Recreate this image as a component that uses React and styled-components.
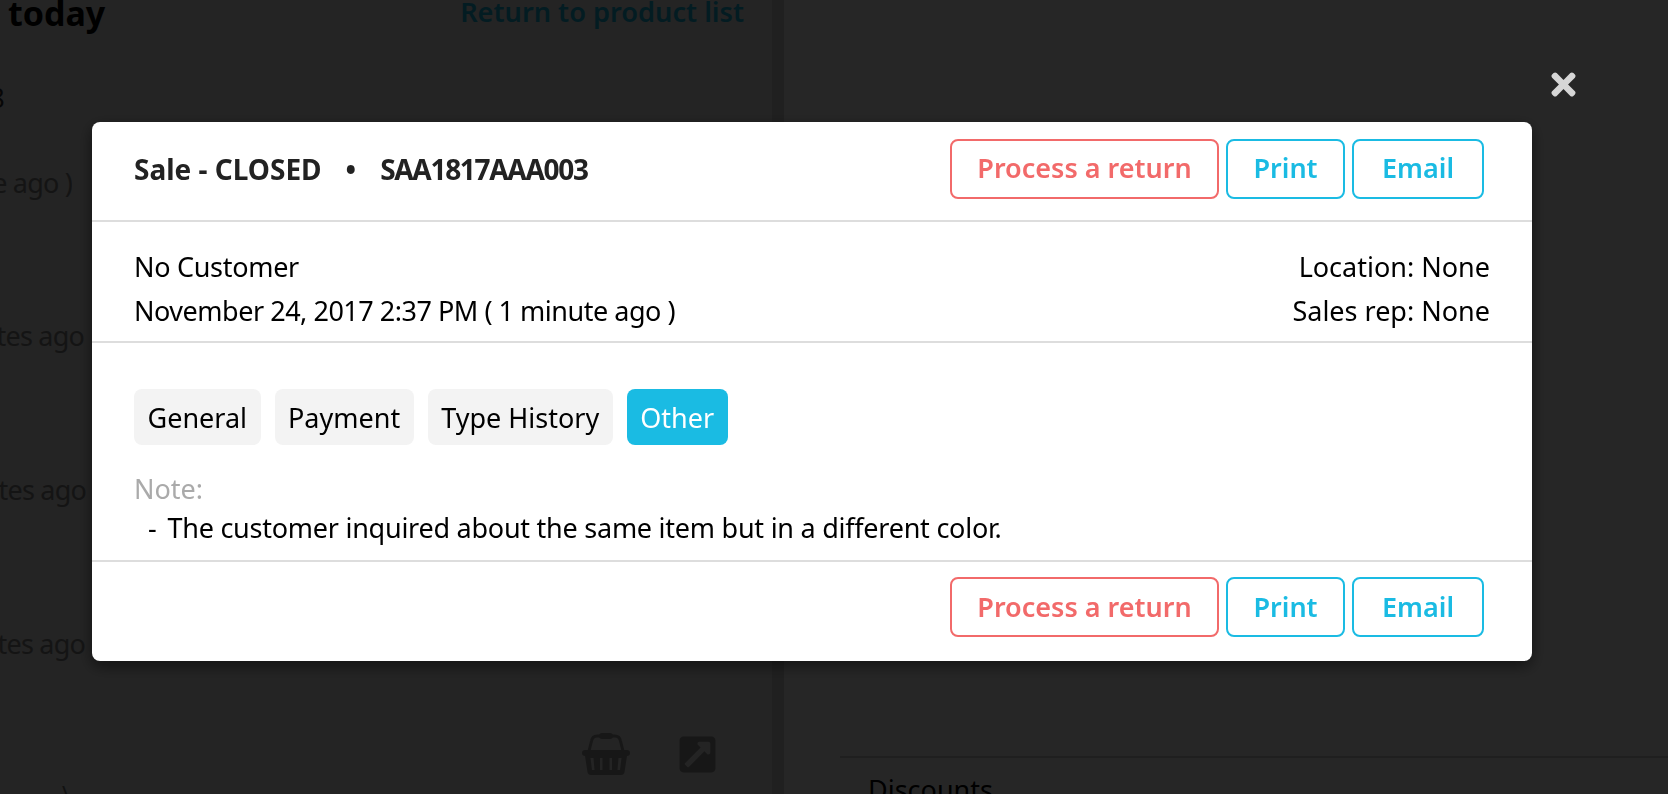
import * as React from "react";
import styled, { createGlobalStyle } from "styled-components";
import { FaTimes, FaExternalLinkSquareAlt } from "react-icons/fa";

const GlobalStyle = createGlobalStyle`
    html, body {
        margin: 0;
        height: 100%;
        overflow: hidden;
    }

    body {
        font-family: "Noto Sans", "Open Sans", sans-serif;
        font-size: 27px;
        color: #000;
    }

    * {
        box-sizing: border-box;
    }
`;

const Page = styled.div`
    display: flex;
    width: 1668px;
    height: 794px;
    overflow: hidden;
    background: #fff;
`;

const LeftPanel = styled.section`
    width: 772px;
    height: 794px;
    overflow: hidden;
    flex-shrink: 0;
    background: #eee;
`;

const PanelDivider = styled.div`
    width: 12px;
    flex-shrink: 0;
    background: #d6d6d6;
`;

const RightPanel = styled.section`
    flex: 1;
    padding-top: 756px;
`;

const PanelHeader = styled.header`
    display: flex;
    justify-content: space-between;
    align-items: center;
    height: 26px;
    padding: 0 28px 0 8px;
`;

const PanelTitle = styled.h1`
    margin: 0;
    font-size: 34px;
    font-weight: 700;
`;

const BackLink = styled.a`
    margin-top: -3px;
    font-size: 27.2px;
    font-weight: 600;
    color: #1abbe3;
`;

const ClippedText = styled.div`
    display: flex;
    justify-content: flex-end;
    align-items: center;
    width: ${props => props.$width}px;
    height: 48px;
    margin-top: ${props => props.$top}px;
    overflow: hidden;
    white-space: nowrap;
    letter-spacing: -0.8px;
    color: ${props => props.$color || "#888"};
`;

const IconRow = styled.div`
    display: flex;
    justify-content: flex-end;
    align-items: center;
    gap: 47px;
    height: 44px;
    margin-top: 65px;
    padding-right: 54px;
    color: #9a9a9a;
`;

const StrayMark = styled.div`
    padding-left: 62px;
    line-height: 34px;
    font-size: 22px;
    color: #777;
`;

const Rule = styled.div`
    height: 2px;
    margin-left: 56px;
    background: #ccc;
`;

const SectionLabel = styled.div`
    padding: 13px 0 0 84px;
`;

const Overlay = styled.div`
    position: fixed;
    inset: 0;
    padding: 122px 0 0 92px;
    background: rgba(0, 0, 0, 0.85);
`;

const CloseButton = styled.button`
    position: absolute;
    top: 67px;
    left: 1546px;
    display: flex;
    padding: 0;
    border: 0;
    background: none;
    color: #d6d6d6;
`;

const Modal = styled.div`
    width: 1440px;
    height: 539px;
    border-radius: 8px;
    background: #fff;
    box-shadow: 0 5px 15px rgba(0, 0, 0, 0.5);
`;

const ModalHeader = styled.div`
    display: flex;
    justify-content: space-between;
    align-items: center;
    height: 100px;
    padding: 0 48px 5px 42px;
    border-bottom: 2px solid #ddd;
`;

const SaleTitle = styled.div`
    display: flex;
    gap: 24px;
    font-size: 28px;
    font-weight: 700;
    color: #222;
`;

const SaleNumber = styled.span`
    letter-spacing: -1.3px;
`;

const ActionBar = styled.div`
    display: flex;
    gap: 7px;
`;

const ActionButton = styled.button`
    width: ${props => props.$width}px;
    height: 60px;
    padding: 0 0 2px;
    border: 2px solid ${props => (props.$danger ? "#f26a6a" : "#1abbe3")};
    border-radius: 8px;
    background: #fff;
    color: ${props => (props.$danger ? "#f26a6a" : "#1abbe3")};
    font-family: inherit;
    font-size: 27px;
    font-weight: 600;
`;

const InfoBlock = styled.div`
    display: flex;
    justify-content: space-between;
    height: 121px;
    padding: 23px 42px 0;
    border-bottom: 2px solid #ddd;
    line-height: 44px;
`;

const AlignedColumn = styled.div`
    text-align: ${props => props.$align || "left"};
`;

const InfoLine = styled.div`
    letter-spacing: ${props => props.$spacing || 0}px;
`;

const DetailBlock = styled.div`
    height: 219px;
    padding: 46px 42px 0;
    border-bottom: 2px solid #ddd;
`;

const TabBar = styled.div`
    display: flex;
    gap: 14px;
`;

const Tab = styled.div`
    display: flex;
    align-items: center;
    height: 56px;
    padding: 0 13.5px;
    border-radius: 8px;
    background: ${props => (props.$active ? "#1abbe3" : "#f3f3f3")};
    color: ${props => (props.$active ? "#fff" : "#000")};
`;

const NoteLabel = styled.div`
    margin-top: 25px;
    line-height: 38px;
    color: #aaa;
`;

const NoteItem = styled.div`
    display: flex;
    gap: 11px;
    padding: 1px 0 0 14px;
    line-height: 38px;
    letter-spacing: -0.25px;
`;

const ModalFooter = styled.div`
    display: flex;
    justify-content: flex-end;
    padding: 15px 48px 0 0;
`;

const BasketIcon = () => (
    <svg width="48" height="44" viewBox="0 0 48 44" fill="currentColor">
        <path d="M7 19 L9.5 9 Q10.5 4 15 4 H33 Q37.5 4 38.5 9 L41 19" fill="none" stroke="currentColor" strokeWidth="3" />
        <rect x="17" y="1" width="14" height="6" rx="3" />
        <rect x="0" y="18" width="48" height="6" rx="3" />
        <path fillRule="evenodd" d="M3 24 H45 L42.5 40 Q42 43 39 43 H9 Q6 43 5.5 40 Z M8.5 26 L10 38 H12.5 L11.5 26 Z M18 26 V38 H20.5 V26 Z M27.5 26 V38 H30 V26 Z M36.5 26 L35.5 38 H38 L39.5 26 Z" />
    </svg>
);

const ActionButtons = () => (
    <ActionBar>
        <ActionButton $danger $width={269}>Process a return</ActionButton>
        <ActionButton $width={119}>Print</ActionButton>
        <ActionButton $width={132}>Email</ActionButton>
    </ActionBar>
);

const tabs = ["General", "Payment", "Type History", "Other"];

const App = () => (
    <>
        <GlobalStyle />
        <Page>
            <LeftPanel>
                <PanelHeader>
                    <PanelTitle>today</PanelTitle>
                    <BackLink>Return to product list</BackLink>
                </PanelHeader>
                <ClippedText $width={4} $top={47} $color="#333">8</ClippedText>
                <ClippedText $width={72} $top={37}>( 1 minute ago )</ClippedText>
                <ClippedText $width={84} $top={105}>2 minutes ago</ClippedText>
                <ClippedText $width={86} $top={106}>2 minutes ago</ClippedText>
                <ClippedText $width={85} $top={106}>3 minutes ago</ClippedText>
                <IconRow>
                    <BasketIcon />
                    <FaExternalLinkSquareAlt size={41} />
                </IconRow>
                <StrayMark>\</StrayMark>
            </LeftPanel>
            <PanelDivider />
            <RightPanel>
                <Rule />
                <SectionLabel>Discounts</SectionLabel>
            </RightPanel>
        </Page>
        <Overlay>
            <CloseButton aria-label="Close">
                <FaTimes size={35} />
            </CloseButton>
            <Modal>
                <ModalHeader>
                    <SaleTitle>
                        <span>Sale - CLOSED</span>
                        <span>•</span>
                        <SaleNumber>SAA1817AAA003</SaleNumber>
                    </SaleTitle>
                    <ActionButtons />
                </ModalHeader>
                <InfoBlock>
                    <AlignedColumn>
                        <InfoLine $spacing={-0.3}>No Customer</InfoLine>
                        <InfoLine $spacing={-0.48}>November 24, 2017 2:37 PM ( 1 minute ago )</InfoLine>
                    </AlignedColumn>
                    <AlignedColumn $align="right">
                        <InfoLine>Location: None</InfoLine>
                        <InfoLine>Sales rep: None</InfoLine>
                    </AlignedColumn>
                </InfoBlock>
                <DetailBlock>
                    <TabBar>
                        {tabs.map(tab => <Tab key={tab} $active={tab === "Other"}>{tab}</Tab>)}
                    </TabBar>
                    <NoteLabel>Note:</NoteLabel>
                    <NoteItem>
                        <span>-</span>
                        <span>The customer inquired about the same item but in a different color.</span>
                    </NoteItem>
                </DetailBlock>
                <ModalFooter>
                    <ActionButtons />
                </ModalFooter>
            </Modal>
        </Overlay>
    </>
);

export default App;
